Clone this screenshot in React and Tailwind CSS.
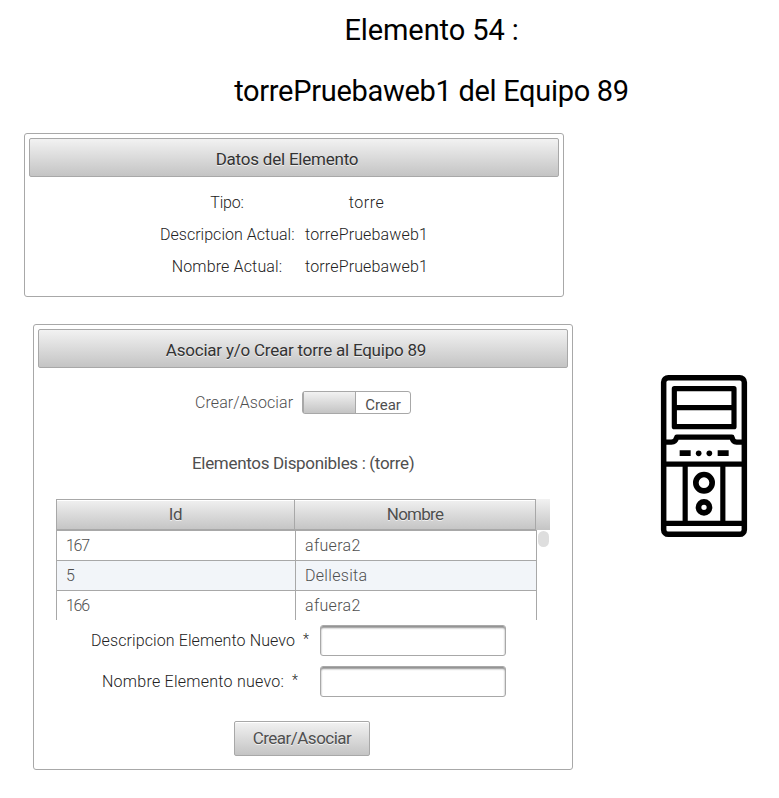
const rows = [
  { id: "167", nombre: "afuera2" },
  { id: "5", nombre: "Dellesita" },
  { id: "166", nombre: "afuera2" },
];

function Panel({ title, className, children }) {
  return (
    <section className={`w-[540px] rounded-[3px] border border-[#a8a8a8] p-1 ${className}`}>
      <h3 className="h-[39px] rounded-[2px] border border-[#a8a8a8] bg-linear-to-b from-[#f2f2f2] to-[#c4c4c4] pt-px pr-[14px] text-center text-[17px] leading-[38px] tracking-[-0.22px] whitespace-nowrap text-[#333333] text-shadow-[0_1px_0_rgba(255,255,255,0.7)]">
        {title}
      </h3>
      {children}
    </section>
  );
}

function DataRow({ label, labelTracking, value, valueTracking }) {
  return (
    <div className="flex h-8 gap-[11px] text-center text-base leading-8 font-light whitespace-nowrap text-[#222222]">
      <dt className={`w-[134px] ${labelTracking}`}>{label}</dt>
      <dd className={`w-[123px] ${valueTracking}`}>{value}</dd>
    </div>
  );
}

function Field({ label, tracking }) {
  return (
    <label className="flex h-[31px] items-center gap-[11px] text-base font-light whitespace-nowrap text-[#222222]">
      <span className="flex w-[218px] justify-center gap-[8px]">
        <span className={tracking}>{label}</span>
        <span className="text-[14px]">*</span>
      </span>
      <input className="h-[31px] w-[186px] rounded-[3px] border border-[#a8a8a8] bg-white px-1 shadow-[inset_0_2px_2px_#8f8f8f] outline-none" />
    </label>
  );
}

function TowerIcon() {
  return (
    <svg className="h-[180px] w-[110px]" viewBox="0 0 330 540" fill="none" stroke="#000" strokeWidth="15.500">
      <rect x="41" y="38" width="242" height="470" rx="14" strokeWidth="16.500" />
      <rect x="73" y="71" width="179" height="114" strokeLinejoin="round" />
      <path d="M72 128H252" />
      <path d="M41 231.500H64Q77 231 80 216.500H246Q248 231 260 231.500H283" strokeLinejoin="round" />
      <path d="M89 264.500H122M203 264.500H236" strokeWidth="17" />
      <circle cx="146" cy="265" r="8.500" fill="#000" stroke="none" />
      <circle cx="178" cy="265" r="8.500" fill="#000" stroke="none" />
      <path d="M41 297.500H283M105.500 297V475M218.500 297V475M41 475H283" />
      <circle cx="162" cy="353" r="24.500" strokeWidth="17" />
      <circle cx="162" cy="427" r="16.500" strokeWidth="17" />
    </svg>
  );
}

export default function App() {
  return (
    <div className="h-[798px] w-[779px] overflow-hidden bg-white font-['Roboto','Liberation_Sans',sans-serif]">
      <header className="pl-[84px] text-center text-[29px] leading-[61px] text-black">
        <h1 className="tracking-[-0.1px]">Elemento 54 :</h1>
        <h1 className="tracking-[-0.3px]">torrePruebaweb1 del Equipo 89</h1>
      </header>

      <div className="flex pt-[11px]">
        <main className="w-[650px]">
          <Panel title="Datos del Elemento" className="ml-6 h-[164px]">
            <dl className="pt-[10px] pl-[131px]">
              <DataRow label="Tipo:" labelTracking="tracking-[-0.2px]" value="torre" valueTracking="tracking-[0.5px]" />
              <DataRow label="Descripcion Actual:" labelTracking="tracking-[0.02px]" value="torrePruebaweb1" valueTracking="tracking-[0.15px]" />
              <DataRow label="Nombre Actual:" labelTracking="tracking-[0.15px]" value="torrePruebaweb1" valueTracking="tracking-[0.15px]" />
            </dl>
          </Panel>

          <Panel title="Asociar y/o Crear torre al Equipo 89" className="mt-[27px] ml-[33px] h-[446px]">
            <div className="mt-[23px] flex h-[23px] justify-start pl-[156px]">
              <span className="w-[108px] pl-px text-base leading-[24px] font-light tracking-[0.08px] text-[#4f4f4f]">Crear/Asociar</span>
              <div className="flex h-[23px] w-[109px] rounded-[3px] border border-[#a8a8a8]">
                <span className="w-[53px] border-r border-l border-[#a8a8a8] bg-linear-to-b from-[#f2f2f2] to-[#c4c4c4]" />
                <span className="flex-1 text-center text-[15px] leading-[26px] tracking-[-0.1px] text-[#4f4f4f]">Crear</span>
              </div>
            </div>

            <h4 className="mt-[34px] h-[30px] pl-[154px] text-[17px] leading-[30px] tracking-[-0.32px] text-[#4f4f4f]">
              Elementos Disponibles : (torre)
            </h4>

            <div className="mt-[21px] ml-[18px] h-[121px] w-[494px] overflow-hidden text-[#4f4f4f]">
              <div className="flex h-[31px] w-[494px] bg-linear-to-b from-[#f2f2f2] to-[#c4c4c4] text-center text-[17px] leading-[29px] text-shadow-[0_1px_0_rgba(255,255,255,0.7)]">
                <div className="w-[238px] border border-r-0 border-[#a8a8a8] tracking-[-0.4px] shadow-[inset_0_1px_0_#ffffff]">Id</div>
                <div className="w-[242px] border border-[#a8a8a8] tracking-[-0.75px] shadow-[inset_0_1px_0_#ffffff]">Nombre</div>
              </div>
              <div className="flex h-[90px] gap-px">
                <div className="w-[481px] border-x border-t border-[#a8a8a8]">
                  {rows.map((row) => (
                    <div key={row.id} className="flex h-[30px] border-b border-[#a8a8a8] text-base leading-[30px] font-light even:bg-[#f2f5f9]">
                      <span className="w-[238px] pl-[9px] tracking-[-1.3px]">{row.id}</span>
                      <span className="flex-1 border-l border-[#a8a8a8] pl-[9px] tracking-[0.3px]">{row.nombre}</span>
                    </div>
                  ))}
                </div>
                <div className="mt-px h-4 w-[11px] rounded-full bg-[#dedede]" />
              </div>
            </div>

            <form className="mt-[5px] flex flex-col gap-[10px] pl-[53px]">
              <Field label="Descripcion Elemento Nuevo" tracking="tracking-[0.1px]" />
              <Field label="Nombre Elemento nuevo:" tracking="tracking-[0.25px]" />
              <button
                type="button"
                className="mt-[14px] ml-[143px] h-[35px] w-[136px] rounded-[2px] border border-[#a8a8a8] bg-linear-to-b from-[#f2f2f2] to-[#c4c4c4] text-[17px] leading-[33px] tracking-[-0.52px] text-[#4f4f4f] shadow-[inset_0_1px_0_#ffffff] text-shadow-[0_1px_0_rgba(255,255,255,0.7)]"
              >
                Crear/Asociar
              </button>
            </form>
          </Panel>
        </main>

        <aside className="pt-[232px]">
          <TowerIcon />
        </aside>
      </div>
    </div>
  );
}
